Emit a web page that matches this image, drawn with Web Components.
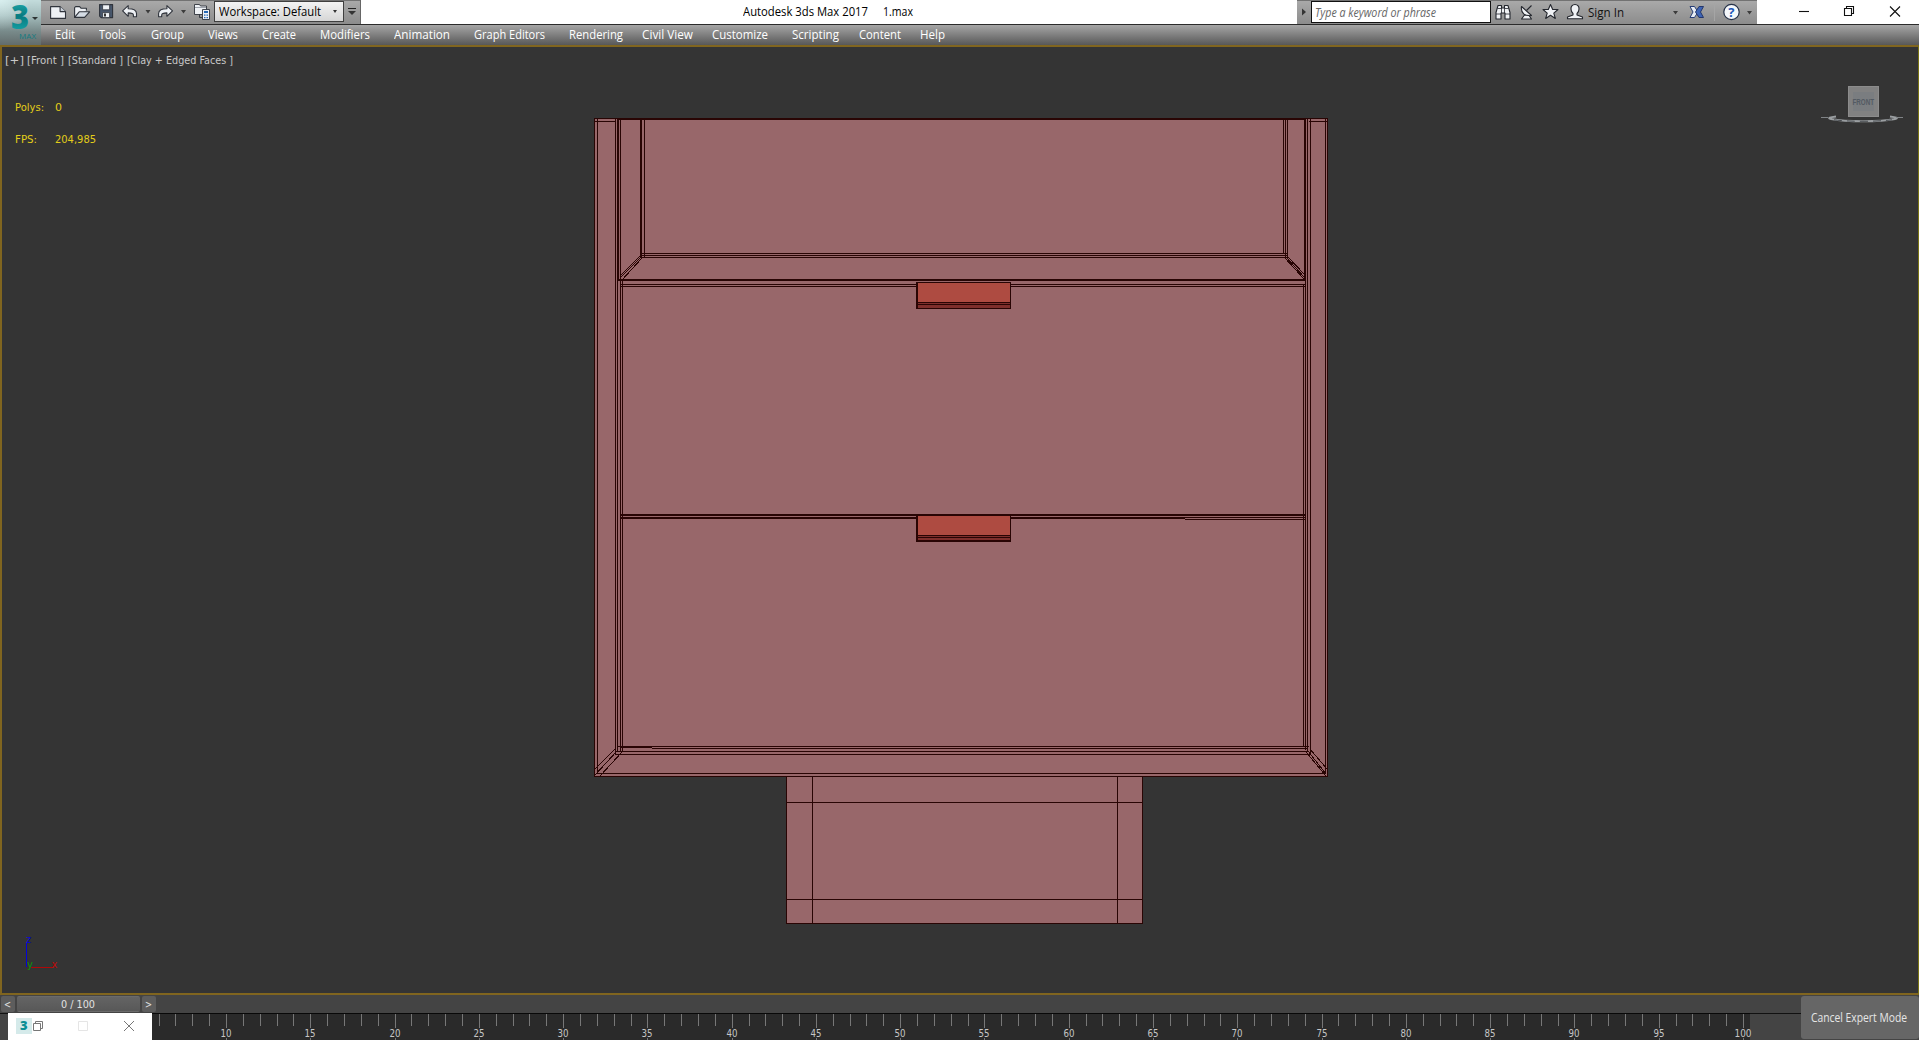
<!DOCTYPE html>
<html lang="en">
<head>
<meta charset="utf-8">
<title>Autodesk 3ds Max 2017</title>
<style>
    html, body {
        margin: 0;
        height: 100%;
        overflow: hidden;
        background: #444;
        --fontMenu: "Open Sans", "Noto Sans", sans-serif;
        --fontView: "DejaVu Sans", "Liberation Sans", sans-serif;
        font-family: var(--fontMenu);
        font-size: 12px;
    }
</style>
</head>
<body>
<max-app></max-app>

<script>
function define(name, html, setup) {
    const template = document.createElement('template');
    template.innerHTML = html;

    window.customElements.define(name, class extends HTMLElement {
        constructor() {
            super();
            this.attachShadow({mode:'open'});
            this.shadowRoot.appendChild(template.content.cloneNode(true));
        }

        connectedCallback() {
            if (setup) setup(this, this.shadowRoot);
        }
    });
}

// text squeezed or stretched to the width in its "w" attribute
define('fit-label', `
    <style>
        :host { display: flex; flex: none; height: 16px; line-height: 16px; }
        span { flex: none; white-space: nowrap; transform-origin: 0 50%; }
    </style>
    <span><slot></slot></span>
`, (host, root) => {
    const span = root.querySelector('span');
    const w = Number(host.getAttribute('w'));
    host.style.width = w + 'px';
    span.style.transform = 'scaleX(' + w / span.getBoundingClientRect().width + ')';
});

define('app-logo', `
    <style>
        :host {
            position: relative;
            display: block;
            flex: none;
            width: 41px;
            height: 45px;
            background: linear-gradient(#c3dcdc 0%, #a3bcbc 35%, #788a8a 70%, #626c6c 100%);
        }
        .glow {
            position: absolute;
            inset: 0;
            background: radial-gradient(circle at 0 0, rgba(235,255,255,.55), rgba(235,255,255,0) 30px);
        }
        svg { position: relative; display: block; }
        text { font-family: "Open Sans", sans-serif; }
    </style>
    <div class="glow"></div>
    <svg width="41" height="45">
        <defs>
            <linearGradient id="g" x1="0" y1="0" x2="0" y2="1">
                <stop offset="0" stop-color="#2cc0c0"/>
                <stop offset=".5" stop-color="#087a80"/>
                <stop offset="1" stop-color="#1ab4b6"/>
            </linearGradient>
        </defs>
        <text x="11" y="28.500" font-size="33" font-weight="800" textLength="18" lengthAdjust="spacingAndGlyphs" fill="url(#g)">3</text>
        <text x="19" y="38.500" font-size="8" textLength="17" fill="#147c82">MAX</text>
        <path d="M32 17h6l-3 3z" fill="#2d3434"/>
    </svg>
`);

define('quick-bar', `
    <style>
        :host {
            display: flex;
            align-items: center;
            flex: none;
            width: 320px;
            height: 24px;
            background: linear-gradient(#727272 0 1px, #a9a9a9 1px, #8c8c8c 100%);
            border-right: 1px solid #666;
            box-sizing: border-box;
        }
        svg { display: block; flex: none; }
        .combo {
            display: flex;
            align-items: center;
            box-sizing: border-box;
            width: 130px;
            height: 21px;
            margin-bottom: 2px;
            padding: 0 6px 0 4px;
            justify-content: space-between;
            border: 1px solid #3f3f3f;
            background: linear-gradient(#f3f3f3, #d6d6d6);
            color: #000;
        }
        .combo fit-label { margin-top: 2px; }
        .more { width: 16px; display: flex; justify-content: center; }
    </style>
    <svg width="173" height="24" viewBox="41 0 173 24" stroke-linejoin="round">
        <g fill="#eef1f5" stroke="#30343c" stroke-width="1.1">
            <path d="M50.6 6.6h9.5l5.4 5v6.8H50.6z"/>
            <path d="M60.1 6.6v5h5.4" fill="#c9d0d8"/>
            <path d="M74.6 17.4V7.6l1-1h4l1.4 1.6h5.4v2.2"/>
            <path d="M74.6 17.4l4.6-5.6h10.4l-5 5.6z" fill="#d5dce4"/>
            <path d="M99.6 4.6h13v13h-11.5l-1.5-1.5z" fill="#47566b"/>
            <path d="M102.6 4.8h7v5h-7zM102.6 12.6h7v5h-7z" stroke-width=".8"/>
            <path d="M104 13.5h2v3h-2z" fill="#333" stroke="none"/>
            <path d="M122.6 10.800l5.600-5.200v3.100c5 0 8.300 1.400 8.300 4.800v3.200h-3.100v-1.700c0-1.500-1.800-2.100-5.200-2.100v3.400z"/>
            <path d="M172.500 10.800l-5.600-5.200v3.100c-5 0-8.300 1.400-8.300 4.800v3.200h3.100v-1.700c0-1.500 1.800-2.100 5.200-2.100v3.400z"/>
            <path d="M194.500 4.500h5l1 1.500h6v8.500h-12z" stroke-width=".9"/>
            <path d="M199.500 14.500v3h4" fill="none" stroke-width=".9"/>
            <path d="M202.500 9.500h7v10h-7z" stroke-width=".9"/>
        </g>
        <path d="M195 7.500h11" stroke="#8b929c" stroke-width=".8"/>
        <path d="M204 11h4v2h-4zM204 14.500h1.500v1.300H204zM206.500 14.500h1.500v1.300h-1.500zM204 17h1.500v1.300H204zM206.500 17h1.500v1.300h-1.500z" fill="#2467b4"/>
        <path d="M145.500 10h5l-2.500 3.500zM181 10h5l-2.500 3.500z" fill="#3c3c3c"/>
    </svg>
    <div class="combo"><fit-label w="102">Workspace: Default</fit-label><svg width="4" height="3"><path d="M0 0h4L2 3z" fill="#333"/></svg></div>
    <div class="more"><svg width="8" height="8"><path d="M0 .5h8" stroke="#222"/><path d="M0 3h8L4 7z" fill="#333"/></svg></div>
`);

define('info-bar', `
    <style>
        :host {
            display: flex;
            align-items: center;
            flex: none;
            width: 460px;
            height: 24px;
            background: linear-gradient(#727272 0 1px, #a9a9a9 1px, #8c8c8c 100%);
        }
        svg { display: block; flex: none; }
        .search {
            box-sizing: border-box;
            width: 180px;
            height: 22px;
            padding: 3px 3px 1px;
            background: #fff;
            border: 1px solid #111;
            font-style: italic;
            color: #666;
        }
        .mark { font: 700 13px "Open Sans", sans-serif; }
        .sign { color: #111; margin-top: 2px; }
    </style>
    <svg width="14" height="24"><path d="M5 8.500l4 3.500-4 3.500z" fill="#333"/></svg>
    <div class="search"><fit-label w="121">Type a keyword or phrase</fit-label></div>
    <svg width="97" height="24" viewBox="1491 0 97 24" fill="#f0f2f5" stroke="#24272e" stroke-width="1.100" stroke-linejoin="round">
        <path d="M1498 5.500h3.500v2.500h3v-2.500h3.500l2 7v6.500h-5v-6h-4v6h-5v-6.500z"/>
        <path d="M1496 14h5M1505 14h5M1497.500 8.500h4M1504.500 8.500h4M1501.500 8v5M1504.500 8v5" fill="none" stroke-width=".8"/>
        <path d="M1521.500 6.500c-1 6 3.500 10.500 10 9z"/>
        <path d="M1526.500 10.500l5-5" fill="none"/>
        <path d="M1524.500 15l-3 4h10l-2.500-3.500z"/>
        <path d="M1550.500 4.500l2.200 5h5.300l-4.200 3.600 1.500 5.400-4.800-3.200-4.800 3.200 1.500-5.400-4.200-3.600h5.300z"/>
        <path d="M1575 4.500c-2.800 0-4.200 2-4 4.500.1 2 .8 3.600 2 4.500v1.500l-5.500 2v1.700h15v-1.700l-5.500-2v-1.500c1.200-.9 1.900-2.500 2-4.500.2-2.500-1.200-4.500-4-4.500z"/>
    </svg>
    <fit-label class="sign" w="36">Sign In</fit-label>
    <svg width="132" height="24" viewBox="1624 0 132 24">
        <path d="M1673 11h5l-2.500 3.500zM1747 11h5l-2.500 3.500z" fill="#3c3c3c"/>
        <path d="M1690 6.500h4.500l3.500 5.500-3.500 5.500h-4.500l3-5.500z" fill="#e8edf5" stroke="#263d76"/>
        <path d="M1703.500 6.500h-4.500l-3.500 5.500 3.500 5.500h4.500l-3-5.500z" fill="#3d64b5" stroke="#24376d"/>
        <path d="M1714.500 3v18" stroke="#a5a5a5"/>
        <circle cx="1731.500" cy="12" r="7.700" fill="#f4f7fb" stroke="#263248" stroke-width="1.200"/>
        <text class="mark" x="1728.300" y="16.700" fill="#1d57b8">?</text>
    </svg>
`);

define('window-buttons', `
    <style>
        :host { display: block; flex: none; width: 162px; height: 24px; }
        svg { display: block; }
    </style>
    <svg width="162" height="24" viewBox="1757 0 162 24" fill="none" stroke="#111" stroke-width="1.100">
        <path d="M1799 11.500h10"/>
        <path d="M1844.500 8.500h7v7h-7zM1846.500 8.500v-2h7v7h-2"/>
        <path d="M1890 6.500l10 10M1900 6.500l-10 10"/>
    </svg>
`);

define('title-bar', `
    <style>
        :host { display: flex; height: 24px; background: #fff; color: #000; }
        .name { flex: 1; display: flex; gap: 15px; padding: 4px 0 0 382px; }
    </style>
    <quick-bar></quick-bar>
    <div class="name"><fit-label w="125">Autodesk 3ds Max 2017</fit-label><fit-label w="30">1.max</fit-label></div>
    <info-bar></info-bar>
    <window-buttons></window-buttons>
`);

define('menu-bar', `
    <style>
        :host {
            display: block;
            height: 21px;
            box-sizing: border-box;
            border-top: 1px solid #2b2b2b;
            background: linear-gradient(#a6a6a6, #585858);
            color: #fff;
        }
        nav { display: flex; padding: 2px 0 0 14px; }
    </style>
    <nav></nav>
`, (host, root) => {
    // label, width, space after it
    const items = [
        ['Edit', 20, 24], ['Tools', 27, 25], ['Group', 33, 24], ['Views', 30, 24],
        ['Create', 34, 24], ['Modifiers', 50, 24], ['Animation', 56, 24],
        ['Graph Editors', 71, 24], ['Rendering', 54, 19], ['Civil View', 51, 19],
        ['Customize', 56, 24], ['Scripting', 47, 20], ['Content', 42, 19], ['Help', 25, 0]
    ];
    root.querySelector('nav').innerHTML = items.map(([text, w, gap]) =>
        `<fit-label w="${w}" style="margin-right:${gap}px">${text}</fit-label>`).join('');
});

define('cabinet-model', `
    <style>
        :host { display: block; }
        svg { display: block; }
        rect { fill: #290504; }
        .clay { fill: #98676a; }
        .handle { fill: #ae4b41; }
        .lip { fill: #7e2f2c; }
        .slant { fill: none; stroke: #290504; stroke-width: 1; }
    </style>
    <svg width="734" height="806" viewBox="594 118 734 806" shape-rendering="crispEdges">
        <rect class="clay" x="594" y="118" width="734" height="659"/>
        <rect class="clay" x="786" y="776" width="357" height="148"/>
        <g class="edges"></g>
        <path class="slant" d="M641 255l-21 21M641 257l-20 20M642 258l-20 22M1287 256l18 19M1286 257l18 20M1285 258l19 21"/>
        <path class="slant" d="M615 749l-21 21M617 751l-22 24M622 752l-22 24M1310 749l17 20M1308 751l18 23M1306 752l20 24"/>
    </svg>
`, (host, root) => {
    // x, y, length, thickness
    const across = [
        [594,118,734,1], [617,119,689,1], [594,121,22,1], [1309,121,19,1],
        [641,253,647,1], [641,255,646,1], [641,257,646,1], [617,279,689,2],
        [620,284,686,1], [620,286,686,1],
        [620,514,686,2], [620,517,565,2], [1185,517,120,1], [1185,519,120,1],
        [617,746,692,1], [620,747,32,1], [652,748,655,1], [617,751,692,1], [615,754,696,1],
        [597,773,729,1], [594,776,734,1],
        [786,802,357,1], [786,899,357,1], [786,923,357,1]
    ];
    const down = [
        [594,118,659,1], [597,118,656,1], [615,118,637,1], [617,118,163,2], [617,281,471,1],
        [620,118,634,1], [622,281,471,1], [640,118,139,2], [644,118,139,1],
        [1283,118,136,1], [1285,118,140,1], [1287,118,140,1], [1304,118,163,2],
        [1303,284,463,1], [1305,280,470,1], [1307,118,634,1], [1310,118,637,1],
        [1325,118,656,1], [1327,118,659,1],
        [786,776,148,1], [812,776,148,1], [1117,776,148,1], [1142,776,148,1]
    ];
    const rect = (x, y, w, h, name = '') =>
        `<rect class="${name}" x="${x}" y="${y}" width="${w}" height="${h}"/>`;

    root.querySelector('.edges').innerHTML = [
        ...across.map(([x, y, l, t]) => rect(x, y, l, t)),
        ...down.map(([x, y, l, t]) => rect(x, y, t, l)),
        // upper handle
        rect(916, 282, 95, 27),
        rect(918, 283, 92, 19, 'handle'),
        rect(918, 303, 92, 1, 'lip'),
        rect(918, 305, 92, 3, 'lip'),
        // lower handle
        rect(916, 514, 95, 28),
        rect(918, 516, 92, 19, 'handle'),
        rect(918, 536, 92, 1, 'lip'),
        rect(918, 538, 92, 2, 'lip')
    ].join('');
});

define('view-cube', `
    <style>
        :host { display: block; }
        svg { display: block; }
    </style>
    <svg width="84" height="42" viewBox="1820 84 84 42">
        <path d="M1836 116.500c-6 .8-9 1.600-5 2.500 16 3 48 3 64 0 4-.9 1-1.700-5-2.500" fill="none" stroke="#9a9ea1" stroke-width="2"/>
        <path d="M1834 119.800c14 2 42 2 58 0" fill="none" stroke="#484c50" stroke-width="1" stroke-dasharray="8 5"/>
        <path d="M1821 117.500h7M1896 117.500h7" stroke="#808487"/>
        <rect x="1848" y="86" width="31" height="31" fill="#818181"/>
        <rect x="1848.500" y="86.500" width="30" height="30" fill="none" stroke="#8c8c8c"/>
        <rect x="1853" y="92" width="21" height="19" fill="#7a7d80"/>
        <text x="1852.500" y="105" font-family="Liberation Sans" font-weight="700" font-size="8.500" textLength="21.500" lengthAdjust="spacingAndGlyphs" fill="#535a62">FRONT</text>
    </svg>
`);

define('axis-tripod', `
    <style>
        :host { display: block; }
        svg { display: block; }
        text { font-family: "DejaVu Sans", sans-serif; font-size: 10px; }
    </style>
    <svg width="40" height="40" viewBox="22 934 40 40">
        <path d="M26.500 943v24" stroke="#0404d8"/>
        <path d="M31 967.500h22" stroke="#b00808"/>
        <text x="26" y="943" fill="#0404d8">z</text>
        <text x="27" y="968" fill="#0a960a">y</text>
        <text x="51.500" y="968" fill="#c00808">x</text>
    </svg>
`);

define('max-viewport', `
    <style>
        :host {
            position: relative;
            display: block;
            box-sizing: border-box;
            height: 950px;
            border: 2px solid #80651f;
            border-right: 1px solid #7a7414;
            background: #343434;
            font: 11px var(--fontView);
            color: #c8c8c8;
        }
        .caption { display: flex; gap: 4px; padding: 6px 0 0 3px; }
        .caption fit-label:first-child { margin-right: -1px; }
        .stats {
            display: grid;
            grid-template-columns: 40px auto;
            row-gap: 16px;
            padding: 31px 0 0 13px;
            color: #e3cd19;
        }
        /* objects placed in the scene */
        cabinet-model { position: absolute; left: 592px; top: 71px; }
        view-cube { position: absolute; left: 1818px; top: 37px; }
        axis-tripod { position: absolute; left: 20px; top: 887px; }
    </style>
    <div class="caption">
        <fit-label w="19">[+]</fit-label>
        <fit-label w="37">[Front&nbsp;]</fit-label>
        <fit-label w="55">[Standard&nbsp;]</fit-label>
        <fit-label w="106">[Clay + Edged Faces&nbsp;]</fit-label>
    </div>
    <div class="stats">
        <fit-label w="29">Polys:</fit-label><fit-label w="7">0</fit-label>
        <fit-label w="22">FPS:</fit-label><fit-label w="41">204,985</fit-label>
    </div>
    <cabinet-model></cabinet-model>
    <view-cube></view-cube>
    <axis-tripod></axis-tripod>
`);

define('time-slider', `
    <style>
        :host { display: flex; gap: 2px; height: 16px; padding: 1px 0 1px 1px; font: 11px var(--fontView); color: #e2e2e2; }
        div {
            display: flex;
            justify-content: center;
            box-sizing: border-box;
            width: 14px;
            padding: 1px 1px 0 0;
            border-radius: 2px;
            background: #5d5d5d;
        }
        .thumb { width: 123px; background: linear-gradient(#6b6b6b 0 1px, #646464 1px, #585858 15px, #6b6b6b 15px); }
    </style>
    <div><fit-label w="7">&lt;</fit-label></div>
    <div class="thumb"><fit-label w="34">0 / 100</fit-label></div>
    <div><fit-label w="7">&gt;</fit-label></div>
`);

define('mini-window', `
    <style>
        :host { display: block; flex: none; width: 144px; height: 27px; background: #fff; }
        svg { display: block; }
    </style>
    <svg width="144" height="27" viewBox="8 1013 144 27" fill="none">
        <rect x="16" y="1018" width="16" height="16" fill="#d5eaea"/>
        <text x="20" y="1030" font-family="Open Sans" font-weight="800" font-size="13" fill="#0c8f94">3</text>
        <path d="M33.500 1023.500h7v7h-7zM35.500 1023.500v-2h7v7h-2" stroke="#777"/>
        <path d="M78.500 1021.500h9v9h-9z" stroke="#e5e5e5"/>
        <path d="M124 1021l10 10M134 1021l-10 10" stroke="#777"/>
    </svg>
`);

define('time-ruler', `
    <style>
        :host { display: block; flex: none; width: 1598px; height: 26px; background: #2a2a2a; }
        svg { display: block; overflow: visible; }
        text { font: 11px "DejaVu Sans", sans-serif; fill: #c6c6c6; }
        .tick { fill: #777; }
        .gap { fill: #2a2a2a; }
    </style>
    <svg width="1598" height="26" viewBox="152 1014 1598 26"></svg>
`, (host, root) => {
    let html = '';
    for (let frame = 6; frame <= 100; frame++) {
        const x = Math.floor(226.5 + (frame - 10) * 16.855);
        const major = frame % 5 === 0;
        html += `<rect class="tick" x="${x}" y="1014" width="1" height="${major ? 26 : 12}"/>`;
        if (major) {
            const w = frame === 100 ? 17 : 11;
            html += `<rect class="gap" x="${x - w / 2}" y="1028" width="${frame === 100 ? 15 : w}" height="10"/>`;
            html += `<text x="${x - w / 2}" y="1037" textLength="${w}" lengthAdjust="spacingAndGlyphs">${frame}</text>`;
        }
    }
    root.querySelector('svg').innerHTML = html;
});

define('expert-button', `
    <style>
        :host {
            display: flex;
            align-items: center;
            justify-content: center;
            box-sizing: border-box;
            height: 43px;
            margin-top: 1px;
            padding: 1px 2px 0 0;
            border-radius: 3px;
            background: #666;
            color: #e6e6e6;
        }
    </style>
    <fit-label w="96">Cancel Expert Mode</fit-label>
`);

define('max-app', `
    <style>
        :host { display: flex; flex-direction: column; height: 1040px; }
        header { display: flex; height: 45px; }
        header > div { flex: 1; }
        footer { display: grid; grid-template-columns: 1801px 118px; height: 45px; background: #444; }
        .track { display: flex; box-sizing: border-box; height: 27px; }
        .track .edge { width: 8px; border-top: 1px solid #111; }
        .track .rest { width: 51px; border-top: 1px solid #111; }
        time-ruler { border-top: 1px solid #080808; }
    </style>
    <header>
        <app-logo></app-logo>
        <div>
            <title-bar></title-bar>
            <menu-bar></menu-bar>
        </div>
    </header>
    <max-viewport></max-viewport>
    <footer>
        <div>
            <time-slider></time-slider>
            <div class="track">
                <div class="edge"></div>
                <mini-window></mini-window>
                <time-ruler></time-ruler>
                <div class="rest"></div>
            </div>
        </div>
        <expert-button></expert-button>
    </footer>
`);
</script>
</body>
</html>
